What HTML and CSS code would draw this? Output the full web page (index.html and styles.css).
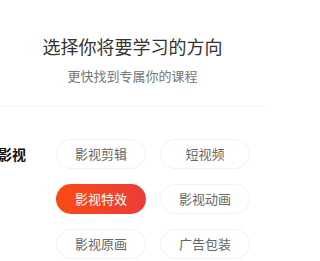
FILE: index.html
```html
<!DOCTYPE html>
<html lang="zh">
<head>
<meta charset="utf-8">
<link rel="stylesheet" href="styles.css">
</head>
<body>
<div class="page">
  <header class="head">
    <h1 class="title">选择你将要学习的方向</h1>
    <p class="sub">更快找到专属你的课程</p>
  </header>
  <section class="content">
    <div class="side">影视</div>
    <div class="grid">
      <div class="pill">影视剪辑</div>
      <div class="pill">短视频</div>
      <div class="pill active">影视特效</div>
      <div class="pill">影视动画</div>
      <div class="pill">影视原画</div>
      <div class="pill">广告包装</div>
    </div>
  </section>
</div>
</body>
</html>
```
FILE: styles.css
```css
html, body {
  margin: 0;
  padding: 0;
  background: #fff;
  overflow: hidden;
}
body {
  font-family: "Noto Sans CJK SC", "Noto Sans", sans-serif;
  width: 265px;
  height: 261px;
}
.page {
  width: 265px;
}
.head {
  height: 107px;
  box-sizing: border-box;
  padding-top: 34px;
  border-bottom: 1px solid #f3f3f3;
  text-align: center;
}
.title {
  margin: 0;
  font-size: 18px;
  line-height: 24px;
  font-weight: 400;
  color: #333;
}
.sub {
  margin: 9px 0 0;
  font-size: 13px;
  line-height: 18px;
  color: #777;
}
.content {
  display: flex;
  align-items: flex-start;
  padding-top: 32px;
}
.side {
  width: 58px;
  margin-left: -2px;
  flex: none;
  font-size: 14px;
  line-height: 30px;
  font-weight: 700;
  color: #111;
}
.grid {
  display: grid;
  grid-template-columns: 90px 90px;
  column-gap: 14px;
  row-gap: 15px;
}
.pill {
  height: 30px;
  box-sizing: border-box;
  border: 1px solid #f2f2f2;
  border-radius: 15px;
  text-align: center;
  font-size: 13px;
  line-height: 28px;
  color: #666;
}
.pill.active {
  border-color: transparent;
  background: linear-gradient(90deg, #fb4a12, #ec3c39);
  color: #fff;
}
```
